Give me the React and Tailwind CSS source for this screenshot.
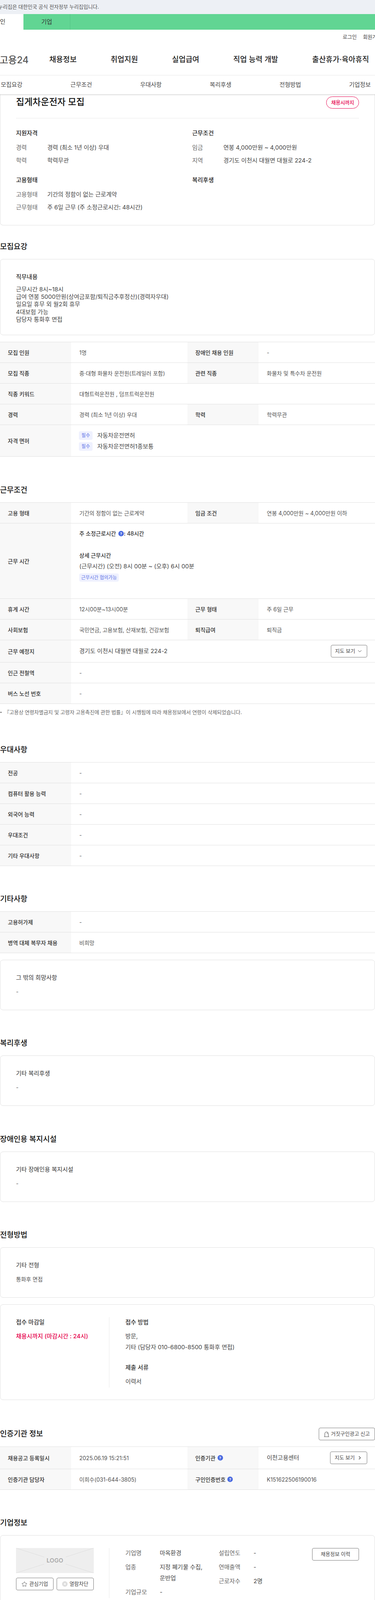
import React from "react";
import { Star, ChevronDown, ChevronRight } from "lucide-react";

const navItems = ["채용정보", "취업지원", "실업급여", "직업 능력 개발", "출산휴가·육아휴직"];
const subNav = ["모집요강", "근무조건", "우대사항", "복리후생", "전형방법", "기업정보"];

const Help = () => (
  <span className="inline-flex shrink-0 w-[14px] h-[14px] rounded-full bg-[#4a6be0] text-white text-[9px] font-bold items-center justify-center leading-none">
    ?
  </span>
);

const Heading = ({ children, mt = "mt-[70px]" }) => (
  <h2 className={`${mt} mb-4 h-[30px] leading-[30px] text-[19px] font-medium text-[#111]`}>{children}</h2>
);

const Th = ({ children }) => (
  <div className="w-[182px] shrink-0 bg-[#f8f8f8] pl-5 flex items-center text-[14px] font-medium text-[#333] gap-[5px]">
    {children}
  </div>
);

const Td = ({ children, wide }) => (
  <div className={`${wide ? "flex-1" : "w-[298px]"} pl-[21px] flex items-center text-[14px] text-[#555]`}>{children}</div>
);

const Row = ({ h = "h-[53px]", children }) => <div className={`flex ${h} border-b border-[#e0e0e0]`}>{children}</div>;

const Table = ({ children }) => <div className="border-t border-[#e0e0e0]">{children}</div>;

const Card = ({ className = "", children }) => (
  <div className={`border border-[#e0e0e0] rounded-lg ${className}`}>{children}</div>
);

const NoteCard = ({ title, value }) => (
  <Card className="h-[129px] pl-10 pt-[35px]">
    <div className="text-[15px] leading-5 text-[#333]">{title}</div>
    <div className="mt-4 text-[14px] leading-5 text-[#555]">{value}</div>
  </Card>
);

const SummaryGroup = ({ title, rows, className = "" }) => (
  <div className={className}>
    <div className="text-[15px] leading-5 font-medium text-[#222] mb-[17px]">{title}</div>
    {rows.map((r) => (
      <div key={r[0]} className="flex h-[32.5px] text-[15px] leading-5">
        <span className="w-20 text-[#666]">{r[0]}</span>
        <span className="text-[#444]">{r[1]}</span>
      </div>
    ))}
  </div>
);

const OutlineButton = ({ className = "", children }) => (
  <button className={`h-[32px] border border-[#777] rounded-[4px] flex items-center justify-center text-[13px] text-[#444] bg-white ${className}`}>
    {children}
  </button>
);

const CompanyItem = ({ label, value, labelW = "w-[88px]", valueW = "" }) => (
  <div className="flex text-[15px] leading-7">
    <span className={`${labelW} shrink-0 text-[#666]`}>{label}</span>
    <span className={`${valueW} text-[#444]`}>{value}</span>
  </div>
);

export default function App() {
  return (
    <div className="w-[960px] h-[4124px] overflow-hidden bg-white font-['Inter','Noto_Sans_CJK_KR',sans-serif]">
      {/* gov banner */}
      <div className="h-9 bg-[#edf0f5] flex items-center text-[13px] text-[#555] whitespace-nowrap">
        <span className="-ml-[20px]">이 누리집은 대한민국 공식 전자정부 누리집입니다.</span>
      </div>

      {/* user type tabs */}
      <div className="h-10 flex text-[15px] text-[#333]">
        <div className="w-[60px] flex items-center">인</div>
        <div className="flex-1 bg-[#61d593] flex">
          <div className="w-[120px] border-r border-[#55c585] flex items-center justify-center">기업</div>
        </div>
      </div>

      <div className="h-[39px] flex justify-end items-start text-[13px] text-[#444] whitespace-nowrap overflow-hidden">
        <div className="flex gap-4 -mr-[17px] pt-[9px]">
          <span>로그인</span>
          <span>회원가입</span>
        </div>
      </div>

      <div className="h-[78px] flex items-center whitespace-nowrap border-b border-[#e8e8e8]">
        <span className="-ml-px text-[24px] font-medium text-[#555] mr-[53px]">고용24</span>
        <div className="flex gap-[87px] text-[19px] font-medium text-[#222]">
          {navItems.map((n) => (
            <span key={n}>{n}</span>
          ))}
        </div>
      </div>

      <div className="relative z-10 h-[48px] bg-white flex items-center justify-between pl-[2px] pr-[11px] text-[15px] text-[#444] shadow-[0_2px_3px_rgba(0,0,0,0.15)]">
        {subNav.map((n) => (
          <span key={n}>{n}</span>
        ))}
      </div>

      {/* summary */}
      <div className="h-[336px] border border-t-0 border-[#e0e0e0] rounded-b-lg px-10">
        <div className="h-[62px] flex justify-between items-start border-b border-[#e8e8e8]">
          <h1 className="text-[23px] leading-10 font-medium text-[#111]">집게차운전자 모집</h1>
          <span className="mt-[6px] w-[84px] h-[31px] border border-[#e6004c] rounded-full text-[13px] tracking-[-0.3px] font-medium text-[#e6004c] flex items-center justify-center">
            채용시까지
          </span>
        </div>
        <div className="flex pt-[28px]">
          <div className="w-[451px]">
            <SummaryGroup
              title="지원자격"
              rows={[
                ["경력", "경력 (최소 1년 이상) 우대"],
                ["학력", "학력무관"],
              ]}
            />
            <SummaryGroup
              className="mt-[18px]"
              title="고용형태"
              rows={[
                ["고용형태", "기간의 정함이 없는 근로계약"],
                ["근무형태", "주 6일 근무 (주 소정근로시간: 48시간)"],
              ]}
            />
          </div>
          <div>
            <SummaryGroup
              title="근무조건"
              rows={[
                ["임금", "연봉 4,000만원 ~ 4,000만원"],
                ["지역", "경기도 이천시 대월면 대월로 224-2"],
              ]}
            />
            <SummaryGroup className="mt-[18px]" title="복리후생" rows={[]} />
          </div>
        </div>
      </div>

      {/* 모집요강 */}
      <Heading mt="mt-10">모집요강</Heading>
      <Card className="h-[195px] pl-10 pt-[35px]">
        <div className="text-[15px] leading-5 font-medium text-[#333]">직무내용</div>
        <div className="mt-3 text-[15px] leading-[19.2px] text-[#444]">
          <p>근무시간 8시~18시</p>
          <p>급여 연봉 5000만원(상여금포함/퇴직금추후정산)(경력자우대)</p>
          <p>일요일 휴무 외 월2회 휴무</p>
          <p>4대보험 가능</p>
          <p>담당자 통화후 면접</p>
        </div>
      </Card>
      <div className="mt-[17px]">
        <Table>
          <Row>
            <Th>모집 인원</Th>
            <Td>1명</Td>
            <Th>장애인 채용 인원</Th>
            <Td wide>-</Td>
          </Row>
          <Row>
            <Th>모집 직종</Th>
            <Td>중·대형 화물차 운전원(트레일러 포함)</Td>
            <Th>관련 직종</Th>
            <Td wide>화물차 및 특수차 운전원</Td>
          </Row>
          <Row>
            <Th>직종 키워드</Th>
            <Td wide>대형트럭운전원 , 덤프트럭운전원</Td>
          </Row>
          <Row>
            <Th>경력</Th>
            <Td>경력 (최소 1년 이상) 우대</Td>
            <Th>학력</Th>
            <Td wide>학력무관</Td>
          </Row>
          <Row h="h-[81px]">
            <Th>자격 면허</Th>
            <div className="flex-1 pl-5 pt-[16px] flex flex-col gap-[6px] text-[15px] text-[#444]">
              {["자동차운전면허", "자동차운전면허1종보통"].map((l) => (
                <div key={l} className="flex items-center gap-3 h-[22px]">
                  <span className="w-[35px] h-[22px] rounded bg-[#eff1fe] text-[#5c72e6] text-[12px] flex items-center justify-center">
                    필수
                  </span>
                  {l}
                </div>
              ))}
            </div>
          </Row>
        </Table>
      </div>

      {/* 근무조건 */}
      <Heading mt="mt-[71px]">근무조건</Heading>
      <Table>
        <Row>
          <Th>고용 형태</Th>
          <Td>기간의 정함이 없는 근로계약</Td>
          <Th>임금 조건</Th>
          <Td wide>연봉 4,000만원 ~ 4,000만원 이하</Td>
        </Row>
        <Row h="h-[193px]">
          <Th>근무 시간</Th>
          <div className="flex-1 pl-[21px] pt-[16px] text-[#444]">
            <div className="text-[14px] leading-5 font-medium text-[#333] flex items-center gap-[6px]">
              주 소정근로시간
              <span className="flex items-center">
                <Help />: 48시간
              </span>
            </div>
            <div className="mt-9 text-[14px] leading-5 font-medium text-[#333]">상세 근무시간</div>
            <div className="mt-2 text-[15px] leading-5">(근무시간) (오전) 8시 00분 ~ (오후) 6시 00분</div>
            <div className="mt-2 w-[101px] h-[21px] rounded bg-[#eff1fe] text-[#5c72e6] text-[12px] flex items-center justify-center">
              근무시간 협의가능
            </div>
          </div>
        </Row>
        <Row>
          <Th>휴게 시간</Th>
          <Td>12시00분~13시00분</Td>
          <Th>근무 형태</Th>
          <Td wide>주 6일 근무</Td>
        </Row>
        <Row>
          <Th>사회보험</Th>
          <Td>국민연금, 고용보험, 산재보험, 건강보험</Td>
          <Th>퇴직급여</Th>
          <Td wide>퇴직금</Td>
        </Row>
        <Row h="h-[57px]">
          <Th>근무 예정지</Th>
          <div className="flex-1 pl-[21px] pr-5 flex items-center justify-between text-[15px] text-[#444]">
            경기도 이천시 대월면 대월로 224-2
            <OutlineButton className="w-[93px] gap-1">
              지도 보기 <ChevronDown size={16} strokeWidth={1.5} />
            </OutlineButton>
          </div>
        </Row>
        <Row>
          <Th>인근 전철역</Th>
          <Td wide>-</Td>
        </Row>
        <Row>
          <Th>버스 노선 번호</Th>
          <Td wide>-</Td>
        </Row>
      </Table>
      <div className="mt-[11px] h-5 leading-5 text-[13px] text-[#666] flex items-center whitespace-nowrap">
        <span className="w-[3px] h-[3px] rounded-full bg-[#555] ml-[1px] mr-[7px]"></span>
        『고용상 연령차별금지 및 고령자 고용촉진에 관한 법률』이 시행됨에 따라 채용정보에서 연령이 삭제되었습니다.
      </div>

      {/* 우대사항 */}
      <Heading mt="mt-[72px]">우대사항</Heading>
      <Table>
        {["전공", "컴퓨터 활용 능력", "외국어 능력", "우대조건", "기타 우대사항"].map((t) => (
          <Row key={t}>
            <Th>{t}</Th>
            <Td wide>-</Td>
          </Row>
        ))}
      </Table>

      {/* 기타사항 */}
      <Heading>기타사항</Heading>
      <Table>
        <Row>
          <Th>고용허가제</Th>
          <Td wide>-</Td>
        </Row>
        <Row>
          <Th>병역 대체 복무자 채용</Th>
          <Td wide>비희망</Td>
        </Row>
      </Table>
      <div className="mt-[17px]">
        <NoteCard title="그 밖의 희망사항" value="-" />
      </div>

      <Heading>복리후생</Heading>
      <NoteCard title="기타 복리후생" value="-" />

      <Heading mt="mt-[71px]">장애인용 복지시설</Heading>
      <NoteCard title="기타 장애인용 복지시설" value="-" />

      {/* 전형방법 */}
      <Heading>전형방법</Heading>
      <NoteCard title="기타 전형" value="통화후 면접" />
      <Card className="mt-[17px] h-[245px] pl-10 pt-8">
        <div className="flex h-[180px]">
          <div className="w-[239px] border-r border-[#e8e8e8] pt-[3px]">
            <div className="text-[15px] leading-5 font-medium text-[#333]">접수 마감일</div>
            <div className="mt-4 text-[15px] leading-5 font-medium text-[#e6004c]">채용시까지 (마감시간 : 24시)</div>
          </div>
          <div className="pl-[41px] pt-[3px]">
            <div className="text-[15px] leading-5 font-medium text-[#333]">접수 방법</div>
            <div className="mt-[12px] text-[15px] leading-7 text-[#444]">
              <p>방문,</p>
              <p>기타 (담당자 010-6800-8500 통화후 면접)</p>
            </div>
            <div className="mt-7 text-[15px] leading-5 font-medium text-[#333]">제출 서류</div>
            <div className="mt-4 text-[15px] leading-5 text-[#444]">이력서</div>
          </div>
        </div>
      </Card>

      {/* 인증기관 정보 */}
      <div className="mt-[71px] mb-4 h-8 flex items-center justify-between">
        <h2 className="text-[19px] font-medium text-[#111]">인증기관 정보</h2>
        <OutlineButton className="w-[144px] gap-1">
          <svg width="14" height="15" viewBox="0 0 14 15" fill="none" stroke="#555" strokeWidth="1.1">
            <path d="M0.5 14h13M2.5 14V7a4.5 5.5 0 0 1 9 0v7" />
            <path d="M7 4a3 3 0 0 1 2.5 2.5" />
          </svg>
          거짓구인광고 신고
        </OutlineButton>
      </div>
      <Table>
        <Row h="h-[57px]">
          <Th>채용공고 등록일시</Th>
          <Td>2025.06.19 15:21:51</Td>
          <Th>
            인증기관 <Help />
          </Th>
          <div className="flex-1 pl-[21px] pr-5 flex items-center justify-between text-[15px] text-[#444]">
            이천고용센터
            <OutlineButton className="w-[95px] gap-[6px]">
              지도 보기 <ChevronRight size={14} strokeWidth={2.5} />
            </OutlineButton>
          </div>
        </Row>
        <Row>
          <Th>인증기관 담당자</Th>
          <Td>이희수(031-644-3805)</Td>
          <Th>
            구인인증번호 <Help />
          </Th>
          <Td wide>K151622506190016</Td>
        </Row>
      </Table>

      {/* 기업정보 */}
      <Heading>기업정보</Heading>
      <Card className="h-[193px] pl-10 pr-10 pt-8 flex">
        <div className="w-[239px] h-[128px] border-r border-[#e8e8e8] shrink-0">
          <div className="w-[199px]">
            <div className="relative h-16 bg-[#eeeeee] flex items-center justify-center">
              <svg className="absolute inset-0" width="199" height="64" viewBox="0 0 199 64" stroke="#dddddd" fill="none">
                <path d="M0 0L72 23M199 0L127 23M0 64L72 41M199 64L127 41" />
              </svg>
              <span className="relative text-[15px] font-semibold text-[#a8a8a8]">LOGO</span>
            </div>
            <div className="mt-3 flex justify-between">
              <OutlineButton className="w-[96px] gap-[5px]">
                <Star size={15} strokeWidth={1.4} />
                관심기업
              </OutlineButton>
              <OutlineButton className="w-[95px] gap-[5px]">
                <svg width="14" height="14" viewBox="0 0 14 14">
                  <circle cx="7" cy="7" r="7" fill="#dddddd" />
                  <path d="M4.5 4.5l5 5M9.5 4.5l-5 5" stroke="#fff" strokeWidth="1.4" />
                </svg>
                열람차단
              </OutlineButton>
            </div>
          </div>
        </div>
        <div className="pl-[41px] flex flex-col gap-2 w-[280px] shrink-0 -mt-px">
          <CompanyItem label="기업명" value="마옥환경" />
          <CompanyItem label="업종" value="지정 폐기물 수집, 운반업" valueW="w-[125px]" />
          <CompanyItem label="기업규모" value="-" />
        </div>
        <div className="flex flex-col gap-2 -mt-px">
          <CompanyItem label="설립연도" value="-" labelW="w-[89px]" />
          <CompanyItem label="연매출액" value="-" labelW="w-[89px]" />
          <CompanyItem label="근로자수" value="2명" labelW="w-[89px]" />
        </div>
        <OutlineButton className="ml-auto w-[120px]">채용정보 이력</OutlineButton>
      </Card>
    </div>
  );
}
